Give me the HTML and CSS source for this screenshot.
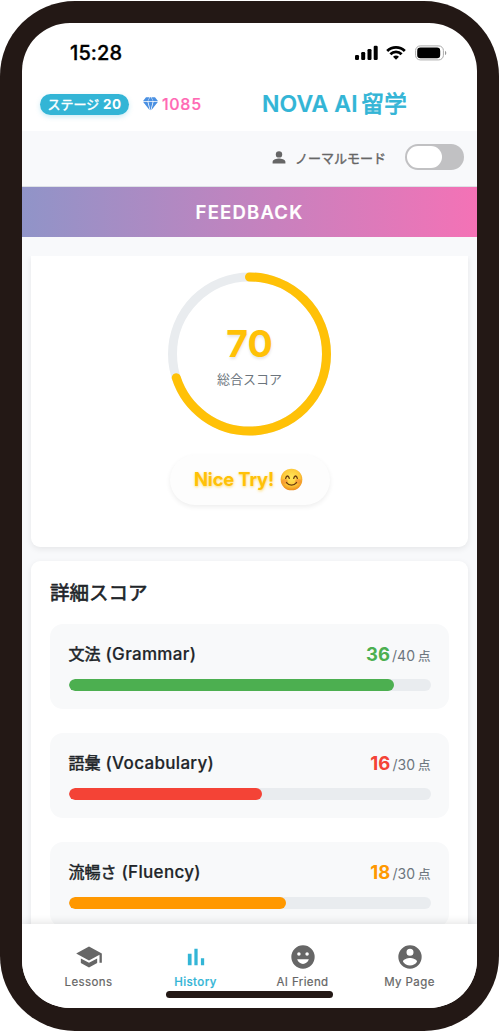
FILE: index.html
```html
<!DOCTYPE html>
<html lang="ja">
<head>
<meta charset="utf-8">
<title>NOVA AI留学</title>
<link rel="stylesheet" href="styles.css">
</head>
<body>
<div class="phone">
  <div class="screen">
    <div class="status">
      <span class="time">15:28</span>
      <div class="status-icons">
        <svg width="24" height="16" viewBox="0 0 24 16"><rect x="0" y="10" width="4" height="5" rx="1.2"/><rect x="6.2" y="7" width="4" height="8" rx="1.2"/><rect x="12.5" y="4" width="4" height="11" rx="1.2"/><rect x="18.7" y="0.8" width="4" height="14.2" rx="1.2"/></svg>
        <svg class="wifi" width="20" height="16" viewBox="0 0 20 16" fill="none" stroke="#000" stroke-width="2.8"><path d="M1.2 5.9a12.5 12.5 0 0 1 17.6 0M4.4 9.2a8 8 0 0 1 11.2 0"/><path d="M10 14.7 7 11.8a4.4 4.4 0 0 1 6 0z" fill="#000" stroke="none"/></svg>
        <svg class="battery" width="32" height="16" viewBox="0 0 32 16"><rect x="0.6" y="0.9" width="27.8" height="14" rx="4.6" fill="none" stroke="#aaa"/><rect x="2.2" y="2.5" width="23" height="10.8" rx="3.2"/><path d="M30 5.8v4.4c1.8-.7 1.8-3.7 0-4.4z" fill="#999"/></svg>
      </div>
    </div>
    <header class="header">
      <span class="stage">ステージ <span class="stage-no">20</span></span>
      <svg class="gem" width="15" height="14" viewBox="0 0 15 14" fill="#4a90e2"><path d="M3 .3h3.4L4.7 4H.1zM7 .3h1L10 4H5zM8.6.3H12L14.9 4h-4.6zM0 4.8h4.5l2.2 8.4zM5.3 4.8h4.4L7.5 13.6zM10.5 4.8H15l-6.7 8.4z"/></svg>
      <span class="gems">1085</span>
      <h1 class="brand">NOVA AI<span class="brand-jp">留学</span></h1>
    </header>
    <div class="mode">
      <svg class="person" width="14" height="13" viewBox="0 0 14 13" fill="#666"><circle cx="7" cy="3.4" r="3.2"/><path d="M.6 12.5v-1.7C.6 8.6 4.8 7.6 7 7.6s6.4 1 6.4 3.2v1.7z"/></svg>
      <span class="mode-label">ノーマルモード</span>
      <div class="switch"><div class="knob"></div></div>
    </div>
    <div class="banner">FEEDBACK</div>
    <main class="content">
      <section class="card total">
        <div class="ring">
          <svg width="163" height="164" viewBox="0.5 0 163 164" fill="none" stroke-width="9"><circle cx="82" cy="82" r="77" stroke="#e9ecef"/><circle cx="82" cy="82" r="77" stroke="#ffc107" stroke-linecap="round" pathLength="100" stroke-dasharray="70 100" transform="rotate(-90 82 82)"/></svg>
          <div class="ring-text"><span class="score">70</span><span class="score-label">総合スコア</span></div>
        </div>
        <div class="cheer">
          <span>Nice Try!</span>
          <svg width="23" height="23" viewBox="0 0 24 24" fill="none">
            <defs><radialGradient id="face" cx=".5" cy=".4" r=".6"><stop offset="0" stop-color="#ffe75a"/><stop offset=".65" stop-color="#fdc93a"/><stop offset="1" stop-color="#ed8b1c"/></radialGradient></defs>
            <circle cx="12" cy="12" r="11.3" fill="url(#face)"/>
            <ellipse cx="5" cy="14" rx="3.2" ry="2.5" fill="#f58a35" opacity=".6"/><ellipse cx="19" cy="14" rx="3.2" ry="2.5" fill="#f58a35" opacity=".6"/>
            <path d="M5.9 10.8c.8-3.3 3-3.3 3.8 0M14.3 10.8c.8-3.3 3-3.3 3.8 0M6.8 15.2c2.7 3.5 7.7 3.5 10.4 0" stroke="#6b3d10" stroke-width="1.4" stroke-linecap="round"/>
          </svg>
        </div>
      </section>
      <section class="card detail">
        <h2 class="detail-title">詳細スコア</h2>
        <div class="item green">
          <div class="row"><span class="name">文法 <span class="latin">(Grammar)</span></span><span class="points"><b>36</b><span class="max">/40<i>点</i></span></span></div>
          <div class="track"><div class="fill" style="width:90%"></div></div>
        </div>
        <div class="item red">
          <div class="row"><span class="name">語彙 <span class="latin">(Vocabulary)</span></span><span class="points"><b>16</b><span class="max">/30<i>点</i></span></span></div>
          <div class="track"><div class="fill" style="width:53.33%"></div></div>
        </div>
        <div class="item orange">
          <div class="row"><span class="name">流暢さ <span class="latin">(Fluency)</span></span><span class="points"><b>18</b><span class="max">/30<i>点</i></span></span></div>
          <div class="track"><div class="fill" style="width:60%"></div></div>
        </div>
      </section>
    </main>
    <nav class="nav">
      <a class="tab"><svg width="28" height="28" viewBox="0 0 24 24"><path d="M5 13.18v4L12 21l7-3.82v-4L12 17l-7-3.82zM12 3 1 9l11 6 9-4.91V17h2V9L12 3z"/></svg>Lessons</a>
      <a class="tab active"><svg width="28" height="28" viewBox="0 0 24 24"><path d="M5 9.2h3.2V19H5zM10.6 5h2.8v14h-2.8zm5.6 8H19v6h-2.8z"/></svg>History</a>
      <a class="tab"><svg width="28" height="28" viewBox="0 0 24 24"><path fill-rule="evenodd" d="M12 2a10 10 0 1 0 0 20 10 10 0 0 0 0-20zM8.5 8a1.5 1.5 0 1 1 0 3 1.5 1.5 0 0 1 0-3zm7 0a1.5 1.5 0 1 1 0 3 1.5 1.5 0 0 1 0-3zM12 18c-2.28 0-4.22-1.66-5-4h10c-.78 2.34-2.72 4-5 4z"/></svg>AI Friend</a>
      <a class="tab"><svg width="28" height="28" viewBox="0 0 24 24"><path fill-rule="evenodd" d="M12 2a10 10 0 1 0 0 20 10 10 0 0 0 0-20zm0 3a3 3 0 1 1 0 6 3 3 0 0 1 0-6zm0 14.2c-2.5 0-4.71-1.28-6-3.22.03-1.99 4-3.08 6-3.08 1.99 0 5.97 1.09 6 3.08a7.2 7.2 0 0 1-6 3.22z"/></svg>My Page</a>
    </nav>
    <div class="home-bar"></div>
  </div>
</div>
</body>
</html>
```
FILE: styles.css
```css
* { box-sizing: border-box; }
body { margin: 0; background: #fff; font-family: Inter, "Noto Sans CJK JP", sans-serif; color: #212529; overflow: hidden; }
svg { display: block; flex: none; }
.phone { width: 499px; height: 1030px; margin-top: 1px; padding: 22px; background: #231815; border-radius: 75px; }
.screen { position: relative; display: flex; flex-direction: column; width: 455px; height: 985px; background: #fff; border-radius: 48px; overflow: hidden; white-space: nowrap; }

.status { height: 60px; flex: none; display: flex; align-items: center; justify-content: space-between; padding: 0 30px 0 48px; color: #000; }
.time { font-size: 20px; font-weight: 500; letter-spacing: .1px; -webkit-text-stroke: .3px currentColor; }
.status-icons { display: flex; align-items: center; }
.wifi { margin-left: 7px; }
.battery { margin-left: 9px; }

.header { height: 48px; flex: none; display: flex; align-items: center; padding: 0 0 6px 18px; }
.stage { width: 89px; height: 21px; border-radius: 11px; background: #33b5d6; color: #fff; font-size: 13px; line-height: 21px; font-weight: 400; -webkit-text-stroke: .45px currentColor; text-align: center; box-shadow: 0 2px 5px rgba(51,181,214,.25); }
.stage-no { font-size: 13.5px; font-weight: 700; letter-spacing: .4px; -webkit-text-stroke: 0; }
.gem { margin-left: 14px; }
.gems { width: 100px; margin: -1px 0 0 4px; color: #ff69b4; font-size: 16px; font-weight: 500; letter-spacing: .7px; -webkit-text-stroke: .2px currentColor; }
.brand { margin: 0; color: #33b5d6; font-size: 23px; line-height: 30px; font-weight: 600; letter-spacing: .1px; -webkit-text-stroke: .2px currentColor; }
.brand-jp { margin-left: 4px; font-size: 22.5px; font-weight: 400; -webkit-text-stroke: .8px currentColor; }

.mode { height: 56px; flex: none; display: flex; align-items: center; justify-content: flex-end; padding: 0 13px 4px 0; background: #f8f9fb; border-bottom: 1px solid #dee2e6; }
.person { margin-top: 2px; }
.mode-label { margin: 2px 19px 0 9px; color: #666; font-size: 13px; font-weight: 400; -webkit-text-stroke: .4px currentColor; }
.switch { width: 59px; height: 26px; padding: 2px; border-radius: 13px; background: #c1c1c3; }
.knob { width: 35px; height: 22px; border-radius: 11px; background: #fff; }

.banner { height: 50px; flex: none; background: linear-gradient(90deg, #9094c8, #f472b6); color: #fff; font-size: 18.5px; line-height: 51px; font-weight: 600; letter-spacing: 1.2px; -webkit-text-stroke: .2px currentColor; text-align: center; }

.content { flex: 1; min-height: 0; overflow: hidden; padding: 19px 9px 0; background: #f8f9fb; }
.card { background: #fff; border-radius: 9px; box-shadow: 0 2px 6px rgba(0,0,0,.08); }
.total { height: 291px; margin-bottom: 14px; padding-top: 16px; display: flex; flex-direction: column; align-items: center; border-radius: 0 0 9px 9px; clip-path: inset(0 -9px -14px); }
.ring { display: grid; }
.ring > * { grid-area: 1 / 1; }
.ring-text { display: flex; flex-direction: column; align-items: center; padding-top: 48px; }
.score { color: #ffc107; font-size: 37.5px; line-height: 48px; font-weight: 700; text-shadow: 0 2px 3px rgba(0,0,0,.1); }
.score-label { color: #6c757d; font-size: 13px; line-height: 22px; }
.cheer { margin-top: 19px; width: 160px; height: 50px; display: flex; align-items: center; justify-content: center; gap: 6px; padding: 0 2px 2px 0; border-radius: 25px; background: #fdfdfd; box-shadow: 0 2px 5px rgba(0,0,0,.07); color: #ffc107; font-size: 18.5px; line-height: 20px; font-weight: 700; letter-spacing: -.2px; text-shadow: 0 1px 3px rgba(255,193,7,.6); }

.detail { height: 420px; padding: 20px 19px; }
.detail-title { margin: 0 0 19px; font-size: 19.5px; line-height: 24px; font-weight: 400; -webkit-text-stroke: .6px currentColor; }
.item { height: 85px; margin-bottom: 24px; padding: 17px 18.5px; border-radius: 13px; background: #f8f9fa; }
.row { height: 26px; display: flex; align-items: center; justify-content: space-between; }
.name { font-size: 16px; line-height: 26px; font-weight: 400; -webkit-text-stroke: .5px currentColor; }
.latin { margin-left: .5px; font-size: 17px; font-weight: 500; letter-spacing: .32px; -webkit-text-stroke: .2px currentColor; }
.points { display: flex; align-items: baseline; }
.points b { font-size: 18.5px; line-height: 26px; letter-spacing: .1px; }
.max { margin-left: 2px; color: #6c757d; font-size: 14px; }
.max i { margin-left: 3px; font-style: normal; font-size: 12.5px; -webkit-text-stroke: .2px currentColor; }
.track { height: 11.5px; margin-top: 12px; border-radius: 6px; background: #e9ecef; overflow: hidden; }
.fill { height: 100%; border-radius: 6px; }
.green b { color: #4caf50; }
.red b { color: #f44336; }
.orange b { color: #ff9800; }
.green .fill { background: #4caf50; }
.red .fill { background: #f44336; }
.orange .fill { background: #ff9800; }

.nav { height: 84px; flex: none; z-index: 1; display: flex; padding: 19px 14px 0 13px; background: #fff; box-shadow: 0 -2px 8px rgba(0,0,0,.1); }
.tab { flex: 1; display: flex; flex-direction: column; align-items: center; gap: 4px; color: #666; fill: currentColor; font-size: 11.5px; line-height: 15px; font-weight: 400; letter-spacing: .4px; -webkit-text-stroke: .2px currentColor; }
.tab svg { stroke: none; }
.active { color: #33b5d6; font-weight: 500; }
.home-bar { position: absolute; z-index: 2; left: 144px; top: 968px; width: 167px; height: 7px; border-radius: 4px; background: #231815; }
```
